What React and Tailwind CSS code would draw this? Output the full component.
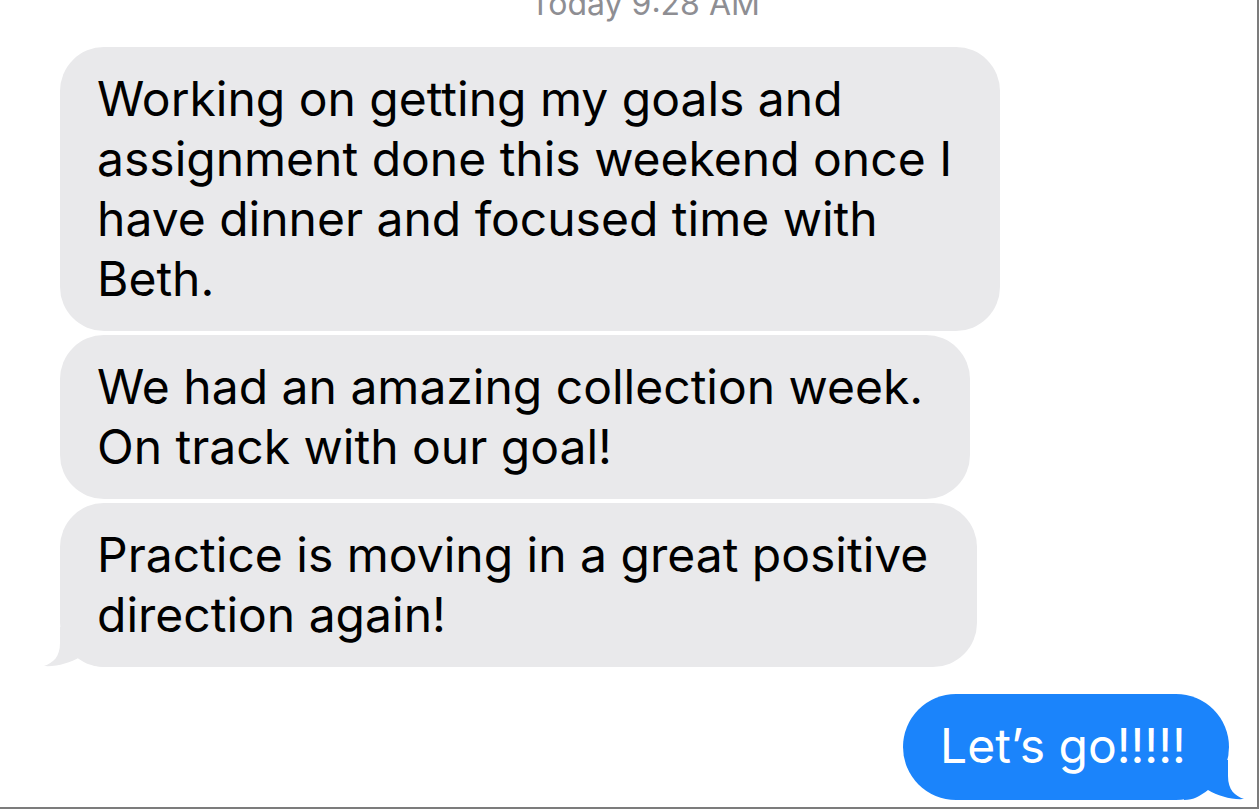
import React from "react";

function Tail({ color, flip }) {
  return (
    <svg
      width="60"
      height="40"
      viewBox="0 0 60 40"
      className={
        flip
          ? "absolute right-[-15px] bottom-0 -scale-x-100"
          : "absolute left-[-16px] bottom-0"
      }
    >
      <path
        d="M16 0 L16 16 C16 30 9 36 0 39 C12 40 26 36 36 30 C44 36 50 40 60 40 L60 0 Z"
        fill={color}
      />
    </svg>
  );
}

function Gray({ lines, width, tail }) {
  return (
    <div
      className={`relative bg-[#e9e9eb] rounded-[44px] pl-[37px] py-[22px] text-[48px] leading-[60px] text-black ${width}`}
    >
      {tail && <Tail color="#e9e9eb" />}
      <div className="relative">
        {lines.map((l, i) => (
          <div key={i} className="whitespace-nowrap">
            {l}
          </div>
        ))}
      </div>
    </div>
  );
}

export default function App() {
  return (
    <div className="w-[1259px] h-[809px] bg-white border-r-2 border-b-2 border-[#7c7c7c] overflow-hidden font-['Inter',sans-serif]">
      <div className="flex flex-col">
        <div className="h-[38px] -mt-[15px] leading-[38px] text-[32px] text-[#8e8e93] text-center pl-[33px]">
          Today 9:28 AM
        </div>
        <div className="mt-[24px] pl-[60px] flex flex-col gap-[4px]">
          <Gray
            width="w-[940px]"
            lines={[
              "Working on getting my goals and",
              "assignment done this weekend once I",
              "have dinner and focused time with",
              "Beth.",
            ]}
          />
          <Gray
            width="w-[910px]"
            lines={["We had an amazing collection week.", "On track with our goal!"]}
          />
          <Gray
            width="w-[917px]"
            tail
            lines={["Practice is moving in a great positive", "direction again!"]}
          />
        </div>
        <div className="mt-[27px] flex justify-end pr-[28px]">
          <div className="relative w-[326px] h-[106px] bg-[#1b84fb] rounded-[53px] pl-[37px] pt-[22px] text-[48px] leading-[60px] text-white whitespace-nowrap">
            <Tail color="#1b84fb" flip />
            <div className="relative">Let’s go!!!!!</div>
          </div>
        </div>
      </div>
    </div>
  );
}
